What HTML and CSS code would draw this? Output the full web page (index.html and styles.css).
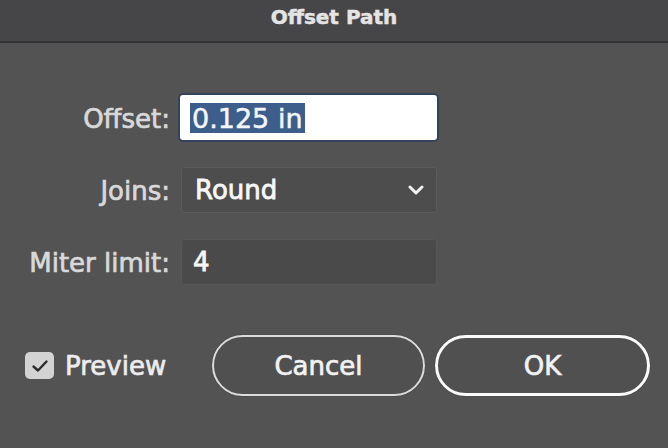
FILE: index.html
```html
<!DOCTYPE html>
<html>
<head>
<meta charset="utf-8">
<link rel="stylesheet" href="styles.css">
</head>
<body>
<div class="dialog">
  <div class="titlebar">Offset Path</div>
  <div class="content">
    <div class="form">
      <label class="label">Offset:</label>
      <div class="field field-text"><span class="sel">0.125 in</span></div>
      <label class="label">Joins:</label>
      <div class="field field-select"><span class="value">Round</span>
        <svg class="chev" width="16" height="10" viewBox="0 0 16 10"><path d="M2 2 L8 8 L14 2" fill="none" stroke="#f2f2f2" stroke-width="3" stroke-linecap="round" stroke-linejoin="round"/></svg>
      </div>
      <label class="label">Miter limit:</label>
      <div class="field field-num"><span class="value">4</span></div>
    </div>
    <div class="footer">
      <div class="preview">
        <span class="checkbox"><svg width="18" height="14" viewBox="0 0 18 14"><path d="M2.5 7.5 L7 11.5 L15.5 2.5" fill="none" stroke="#2b2b2b" stroke-width="2.4" stroke-linecap="round" stroke-linejoin="round"/></svg></span>
        <span class="preview-label">Preview</span>
      </div>
      <div class="buttons">
        <button class="btn">Cancel</button>
        <button class="btn btn-default">OK</button>
      </div>
    </div>
  </div>
</div>
</body>
</html>
```
FILE: styles.css
```css
html, body {
  margin: 0;
  padding: 0;
}
body {
  background: #535353;
  font-family: "DejaVu Sans", "Liberation Sans", sans-serif;
  color: #dedede;
  width: 668px;
  height: 448px;
  overflow: hidden;
}
.dialog {
  display: flex;
  flex-direction: column;
  height: 448px;
}
.titlebar {
  box-sizing: border-box;
  height: 43px;
  background: #464548;
  border-bottom: 2px solid #333234;
  display: flex;
  align-items: center;
  justify-content: center;
  padding-bottom: 8px;
  font-weight: bold;
  font-size: 20px;
  color: #e4e4e4;
  -webkit-text-stroke: 0.5px #e4e4e4;
}
.content {
  display: flex;
  flex-direction: column;
}
.form {
  display: grid;
  grid-template-columns: 170px 257px;
  grid-auto-rows: 46px;
  column-gap: 10px;
  row-gap: 26px;
  padding-top: 52px;
}
.label {
  justify-self: end;
  align-self: center;
  font-size: 26px;
  color: #d9d9d9;
  -webkit-text-stroke: 0.7px #d9d9d9;
  padding-top: 2px;
}
.field {
  box-sizing: border-box;
  display: flex;
  align-items: center;
  font-size: 26px;
  border-radius: 3px;
}
.field-text {
  background: #ffffff;
  box-shadow: 0 0 0 2px #34435c;
  padding-left: 10px;
  height: 45px;
}
.sel {
  background: #3d5d8a;
  color: #f4f6fa;
  padding: 1px 2px 0 2px;
  line-height: 29px;
  font-size: 27px;
  -webkit-text-stroke: 0.5px #f4f6fa;
}
.field-select {
  background: #4d4d4d;
  border: 1px solid #5b5b5b;
  margin-left: 1px;
  padding: 0 12px 0 13px;
  justify-content: space-between;
}
.field-num {
  background: #4a4a4a;
  border: 1px solid #575757;
  margin-left: 1px;
  padding-left: 11px;
}
.value {
  color: #f6f6f6;
  -webkit-text-stroke: 0.8px #f6f6f6;
}
.footer {
  display: flex;
  align-items: center;
  margin-top: 50px;
  padding: 0 18px 0 25px;
}
.preview {
  display: flex;
  align-items: center;
  gap: 11px;
}
.checkbox {
  width: 29px;
  height: 27px;
  border-radius: 5px;
  background: #d3d3d3;
  display: flex;
  align-items: center;
  justify-content: center;
}
.preview-label {
  font-size: 26px;
  color: #ececec;
  -webkit-text-stroke: 0.7px #ececec;
}
.buttons {
  margin-left: auto;
  display: flex;
  gap: 10px;
}
.btn {
  font-family: "DejaVu Sans", "Liberation Sans", sans-serif;
  font-size: 26px;
  color: #f2f2f2;
  -webkit-text-stroke: 0.7px #f2f2f2;
  background: #505050;
  border: 2px solid #dcdcdc;
  border-radius: 31px;
  width: 213px;
  height: 61px;
  padding: 0;
  box-shadow: 0 0 1px #1e1e1e;
}
.btn-default {
  width: 215px;
  border: 3px solid #fafafa;
}
```
